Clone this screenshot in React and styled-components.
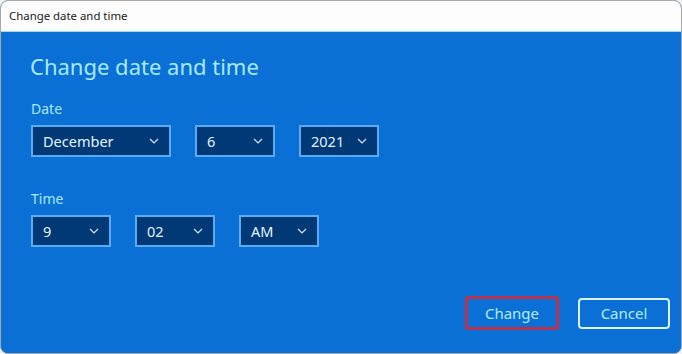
import styled, { createGlobalStyle } from "styled-components";

const GlobalStyle = createGlobalStyle`
  html, body {
    margin: 0;
    padding: 0;
    background: #f2f2f2;
  }
  body {
    font-family: "Noto Sans", "Open Sans", sans-serif;
  }
`;

function Chevron() {
  return (
    <svg width="10" height="6" viewBox="0 0 10 6">
      <polyline
        points="1,1 5,5 9,1"
        fill="none"
        stroke="#cfe6ff"
        strokeWidth="1.2"
      />
    </svg>
  );
}

function Dropdown({ value, width }) {
  return (
    <Select $width={width}>
      <span>{value}</span>
      <Chevron />
    </Select>
  );
}

function App() {
  return (
    <>
      <GlobalStyle />
      <Window>
        <TitleBar>Change date and time</TitleBar>
        <Body>
          <Heading>Change date and time</Heading>
          <Label>Date</Label>
          <Row>
            <Dropdown value="December" width={140} />
            <Dropdown value="6" width={80} />
            <Dropdown value="2021" width={80} />
          </Row>
          <Label $top={33}>Time</Label>
          <Row>
            <Dropdown value="9" width={80} />
            <Dropdown value="02" width={80} />
            <Dropdown value="AM" width={80} />
          </Row>
          <Footer>
            <FocusRing>
              <Button $primary>Change</Button>
            </FocusRing>
            <Button>Cancel</Button>
          </Footer>
        </Body>
      </Window>
    </>
  );
}

export default App;

const Window = styled.div`
  width: 682px;
  height: 354px;
  box-sizing: border-box;
  display: flex;
  flex-direction: column;
  border: 1px solid #a8a8a8;
  border-radius: 8px;
  overflow: hidden;
  background: #0a70d6;
`;

const TitleBar = styled.div`
  height: 30px;
  flex-shrink: 0;
  background: #fdfdfd;
  color: #1a1a1a;
  font-size: 11.4px;
  line-height: 30px;
  padding-left: 8px;
  border-bottom: 1px solid #9fd8f5;
`;

const Body = styled.div`
  flex: 1;
  display: flex;
  flex-direction: column;
  padding: 19px 11px 23px 30px;
  background: #0a70d6;
`;

const Heading = styled.div`
  font-size: 22px;
  color: #a9e9ff;
  line-height: 30px;
  margin-left: -1px;
  margin-bottom: 19px;
`;

const Label = styled.div`
  font-size: 14px;
  color: #a9e9ff;
  line-height: 18px;
  margin-top: ${(p) => p.$top || 0}px;
  margin-bottom: 7px;
`;

const Row = styled.div`
  display: flex;
  gap: 24px;
`;

const Select = styled.div`
  width: ${(p) => p.$width}px;
  height: 32px;
  box-sizing: border-box;
  display: flex;
  align-items: center;
  justify-content: space-between;
  padding: 0 10px 0 10px;
  background: #013977;
  border: 2px solid #5aacf2;
  color: #e4f3ff;
  font-size: 14.5px;
`;

const Footer = styled.div`
  margin-top: auto;
  display: flex;
  justify-content: flex-end;
  align-items: center;
  gap: 19px;
`;

const FocusRing = styled.div`
  border: 3px solid #b5334f;
  border-radius: 2px;
`;

const Button = styled.button`
  width: ${(p) => (p.$primary ? 88 : 92)}px;
  height: ${(p) => (p.$primary ? 28 : 31)}px;
  box-sizing: border-box;
  display: block;
  font-family: inherit;
  font-size: 15px;
  color: #b4ecff;
  background: #0a70d6;
  border: ${(p) => (p.$primary ? "none" : "2px solid #d8f3ff")};
  border-radius: 4px;
  padding: 0;
`;
